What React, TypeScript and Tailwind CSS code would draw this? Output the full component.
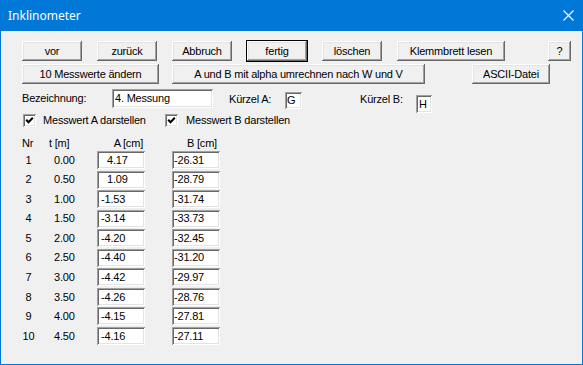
import React from 'react';

const btnCls =
  'h-[20px] flex items-center justify-center bg-[#f0f0f0] shadow-[inset_-1px_-1px_#696969,inset_1px_1px_#ffffff,inset_-2px_-2px_#a0a0a0,inset_2px_2px_#e3e3e3]';
const fieldCls =
  'bg-white flex items-center whitespace-pre shadow-[inset_1px_1px_#a0a0a0,inset_-1px_-1px_#ffffff,inset_2px_2px_#696969,inset_-2px_-2px_#e3e3e3]';

const rows = [
  { nr: 1, t: '0.00', a: '4.17', b: '-26.31' },
  { nr: 2, t: '0.50', a: '1.09', b: '-28.79' },
  { nr: 3, t: '1.00', a: '-1.53', b: '-31.74' },
  { nr: 4, t: '1.50', a: '-3.14', b: '-33.73' },
  { nr: 5, t: '2.00', a: '-4.20', b: '-32.45' },
  { nr: 6, t: '2.50', a: '-4.40', b: '-31.20' },
  { nr: 7, t: '3.00', a: '-4.42', b: '-29.97' },
  { nr: 8, t: '3.50', a: '-4.26', b: '-28.76' },
  { nr: 9, t: '4.00', a: '-4.15', b: '-27.81' },
  { nr: 10, t: '4.50', a: '-4.16', b: '-27.11' },
];

const Button = ({ label, w, className = '' }: { label: string; w: string; className?: string }) => (
  <div className={`${btnCls} ${w} ${className}`}>{label}</div>
);

const CheckBox = () => (
  <div className={`${fieldCls} w-[13px] h-[13px] justify-center`}>
    <svg width="9" height="9" viewBox="0 0 9 9">
      <polyline points="1.2,3.8 3.5,6.3 7.8,1.8" fill="none" stroke="#000" strokeWidth="2" />
    </svg>
  </div>
);

export default function App() {
  return (
    <div
      className="w-[583px] h-[365px] flex flex-col border border-t-0 border-[#0078d7] bg-[#f0f0f0] text-black text-[11px] tracking-[-0.2px] overflow-hidden"
      style={{ fontFamily: '"Liberation Sans", Arial, sans-serif' }}
    >
      {/* title bar */}
      <div className="h-[31px] shrink-0 bg-[#0078d7] flex items-center justify-between pl-[8px] pr-[9px] -mx-[1px]">
        <span className="text-white text-[12px] tracking-normal" style={{ fontFamily: '"Noto Sans", sans-serif' }}>
          Inklinometer
        </span>
        <svg width="11" height="11" viewBox="0 0 11 11">
          <path d="M0.5 0.5 L10.5 10.5 M10.5 0.5 L0.5 10.5" stroke="#fff" strokeWidth="1.1" />
        </svg>
      </div>

      <div className="flex flex-col pl-[21px] pt-[10px]">
        {/* button row 1 */}
        <div className="flex gap-[15px]">
          <Button label="vor" w="w-[60px]" />
          <Button label="zurück" w="w-[60px]" />
          <Button label="Abbruch" w="w-[60px]" />
          <Button label="fertig" w="w-[60px]" className="outline outline-1 outline-black" />
          <Button label="löschen" w="w-[60px]" />
          <Button label="Klemmbrett lesen" w="w-[108px]" />
          <Button label="?" w="w-[23px]" className="ml-[28px]" />
        </div>

        {/* button row 2 */}
        <div className="flex mt-[3px]">
          <Button label="10 Messwerte ändern" w="w-[137px]" />
          <Button label="A und B mit alpha umrechnen nach W und V" w="w-[253px]" className="ml-[13px]" />
          <Button label="ASCII-Datei" w="w-[78px]" className="ml-[47px]" />
        </div>

        {/* Bezeichnung / Kürzel */}
        <div className="flex items-start h-[24px] mt-[5px]">
          <div className="h-[19px] flex items-center w-[90px]">Bezeichnung:</div>
          <div className={`${fieldCls} w-[101px] h-[19px] pl-[3px]`}>4. Messung</div>
          <div className="h-[19px] mt-[1px] flex items-center ml-[16px] w-[56px]">Kürzel A:</div>
          <div className={`${fieldCls} w-[17px] h-[17px] mt-[3px] pl-[2px]`}>G</div>
          <div className="h-[19px] mt-[1px] flex items-center ml-[58px] w-[56px]">Kürzel B:</div>
          <div className={`${fieldCls} w-[16px] h-[18px] mt-[6px] pl-[3px]`}>H</div>
        </div>

        {/* checkboxes */}
        <div className="flex items-center h-[13px] mt-[1px]">
          <div className="ml-[1px]">
            <CheckBox />
          </div>
          <span className="ml-[7px] w-[122px]">Messwert A darstellen</span>
          <CheckBox />
          <span className="ml-[8px]">Messwert B darstellen</span>
        </div>

        {/* header */}
        <div className="flex items-center h-[13px] mt-[10px]">
          <span className="w-[27px]">Nr</span>
          <span className="w-[45px]">t [m]</span>
          <span className="w-[49px] text-right">A [cm]</span>
          <span className="ml-[44px]">B [cm]</span>
        </div>

        {/* data rows */}
        <div className="flex flex-col mt-[1px]">
          {rows.map((r) => (
            <div key={r.nr} className="flex items-start h-[19.55px]">
              <div className="w-[13px] h-[18px] flex items-center justify-center">{r.nr}</div>
              <div className="ml-[19px] w-[43px] h-[18px] flex items-center">{r.t}</div>
              <div className={`${fieldCls} w-[48px] h-[18px] ${r.a.startsWith('-') ? 'pl-[4px]' : 'pl-[10px]'}`}>
                {r.a}
              </div>
              <div className={`${fieldCls} w-[48px] h-[18px] pl-[2px] ml-[27px]`}>{r.b}</div>
            </div>
          ))}
        </div>
      </div>
    </div>
  );
}
